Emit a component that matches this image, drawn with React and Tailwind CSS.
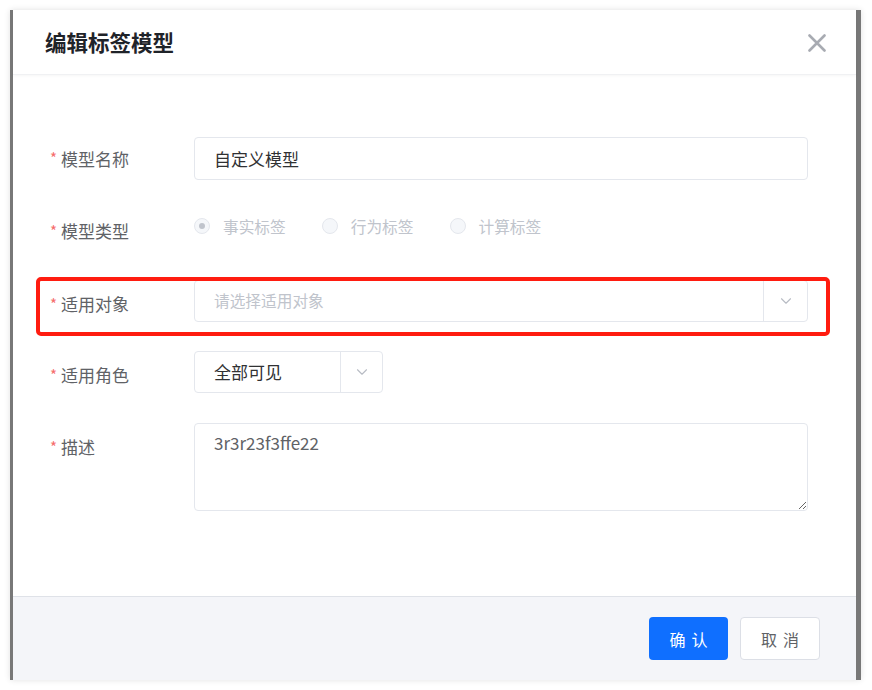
import { ChevronDown } from "lucide-react";

const font = { fontFamily: '"Noto Sans CJK SC", "Noto Sans", sans-serif' };

function Label({ children, shift = "" }) {
  return (
    <div className={"w-[144px] shrink-0 flex items-center text-[17px] text-[#606266] " + shift}>
      <span className="text-[#f56c6c] mr-[4px] text-[15px]">*</span>
      {children}
    </div>
  );
}

function Radio({ checked, label }) {
  return (
    <div className="flex items-center mr-[36px]">
      <span className="w-[16px] h-[16px] rounded-full border border-[#e4e7ed] bg-[#f5f7fa] flex items-center justify-center">
        {checked && <span className="w-[6px] h-[6px] rounded-full bg-[#c0c4cc]" />}
      </span>
      <span className="ml-[13px] text-[15.7px] text-[#c0c4cc]">{label}</span>
    </div>
  );
}

export default function App() {
  return (
    <div className="w-[872px] h-[690px] bg-white pt-[10px] pl-[10px]" style={font}>
      <div className="w-[851px] h-[670px] bg-white border-l-[3px] border-r-[5px] border-[#787878] shadow-[0_0_6px_rgba(0,0,0,0.12)] flex flex-col">
        {/* HEADER */}
        <div className="h-[65px] shrink-0 flex items-center justify-between pl-[32px] pr-[30px] border-b border-[#f0f1f3] shadow-[0_1px_3px_rgba(0,0,0,0.04)]">
          <div className="text-[21.5px] font-bold text-[#1f2329]">编辑标签模型</div>
          <svg width="18" height="18" viewBox="0 0 18 18" className="mt-[1px]">
            <path d="M1.5 1.5L16.5 16.5M16.5 1.5L1.5 16.5" stroke="#a8abb2" strokeWidth="2.6" strokeLinecap="round" />
          </svg>
        </div>

        {/* BODY */}
        <div className="flex-1 pl-[37px] pr-[48px] pt-[62px]">
          <div className="flex h-[43px]">
            <Label>模型名称</Label>
            <div className="flex-1 border border-[#e4e7ed] rounded-[4px] flex items-center px-[19px] text-[17px] text-[#303133]">
              自定义模型
            </div>
          </div>

          <div className="flex h-[42px] mt-[28px]">
            <Label shift="translate-y-[2px]">模型类型</Label>
            <div className="flex-1 flex items-center -mt-[5px]">
              <Radio checked label="事实标签" />
              <Radio label="行为标签" />
              <Radio label="计算标签" />
            </div>
          </div>

          <div className="relative flex h-[42px] mt-[30px]">
            <Label shift="translate-y-[3px]">适用对象</Label>
            <div className="flex-1 border border-[#e4e7ed] rounded-[4px] flex items-center">
              <div className="flex-1 px-[19px] text-[15.7px] text-[#c0c4cc]">请选择适用对象</div>
              <div className="w-[44px] h-full border-l border-[#e4e7ed] flex items-center justify-center">
                <ChevronDown size={18} strokeWidth={1.5} color="#b8bcc4" />
              </div>
            </div>
            <div className="absolute -top-[3px] -bottom-[14px] -left-[14px] -right-[22px] border-[4px] border-[#ff1c10] rounded-[5px] pointer-events-none" />
          </div>

          <div className="flex h-[42px] mt-[29px]">
            <Label shift="translate-y-[3px]">适用角色</Label>
            <div className="w-[189px] border border-[#e4e7ed] rounded-[4px] flex items-center">
              <div className="flex-1 px-[19px] text-[17px] text-[#303133]">全部可见</div>
              <div className="w-[42px] h-full border-l border-[#e4e7ed] flex items-center justify-center">
                <ChevronDown size={18} strokeWidth={1.5} color="#b8bcc4" />
              </div>
            </div>
          </div>

          <div className="flex mt-[30px]">
            <div className="h-[42px] flex">
              <Label shift="translate-y-[3px]">描述</Label>
            </div>
            <textarea
              readOnly
              defaultValue="3r3r23f3ffe22"
              className="flex-1 h-[88px] border border-[#e4e7ed] rounded-[4px] px-[19px] pt-[6px] text-[17px] text-[#606266] outline-none"
              style={font}
            />
          </div>
        </div>

        {/* FOOTER */}
        <div className="h-[84px] shrink-0 bg-[#f4f5f9] border-t border-[#dfe2e8] flex items-center justify-end pr-[36px] gap-[12px]">
          <button className="w-[79px] h-[43px] rounded-[4px] bg-[#0f6fff] text-white text-[16px] tracking-[6px] pl-[6px]">
            确认
          </button>
          <button className="w-[80px] h-[43px] rounded-[4px] bg-white border border-[#dcdfe6] text-[#606266] text-[16px] tracking-[6px] pl-[6px]">
            取消
          </button>
        </div>
      </div>
    </div>
  );
}
